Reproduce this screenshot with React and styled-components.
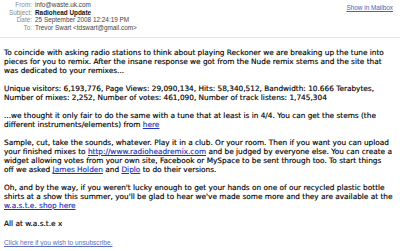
import React from "react";
import styled, { createGlobalStyle } from "styled-components";

const GlobalStyle = createGlobalStyle`
  html, body {
    margin: 0;
    padding: 0;
    background: #ffffff;
  }
  body {
    font-family: "Liberation Sans", Arial, sans-serif;
    width: 400px;
    height: 251px;
    overflow: hidden;
  }
`;

const Page = styled.div`
  width: 400px;
  height: 251px;
  display: flex;
  flex-direction: column;
  background: #fff;
`;

const Header = styled.div`
  display: flex;
  justify-content: space-between;
  align-items: flex-start;
  padding: 1px 7px 0 0;
  height: 36px;
  border-bottom: 1px solid #e4e4e4;
`;

const Fields = styled.div`
  display: grid;
  grid-template-columns: 32px auto;
  column-gap: 3px;
  font-size: 6.4px;
  line-height: 7.7px;
`;

const Label = styled.div`
  text-align: right;
  color: #8a8a8a;
`;

const Value = styled.div`
  color: ${(p) => (p.strong ? "#111" : "#444")};
  font-weight: ${(p) => (p.strong ? "bold" : "normal")};
`;

const MailboxLink = styled.a`
  margin-top: 3px;
  font-size: 6.4px;
  color: #4a62b0;
  text-decoration: underline;
`;

const Body = styled.div`
  padding: 10px 4px 0 4px;
  font-family: "DejaVu Sans", "Liberation Sans", sans-serif;
  font-size: 7.35px;
  line-height: 9px;
  color: #000;
  -webkit-text-stroke: 0.15px currentColor;
  flex: 1;
`;

const Para = styled.div`
  margin: 0 0 9px 0;
`;

const Line = styled.div`
  white-space: nowrap;
`;

const A = styled.a`
  color: #2233bb;
  text-decoration: underline;
`;

const Footer = styled.div`
  padding: 0 4px 4px 4px;
  font-size: 6.6px;
  line-height: 8px;
`;

const Unsub = styled.a`
  color: #5a6ec0;
  text-decoration: underline;
`;

export default function App() {
  return (
    <Page>
      <GlobalStyle />
      <Header>
        <Fields>
          <Label>From:</Label>
          <Value>info@waste.uk.com</Value>
          <Label>Subject:</Label>
          <Value strong>Radiohead Update</Value>
          <Label>Date:</Label>
          <Value>25 September 2008 12:24:19 PM</Value>
          <Label>To:</Label>
          <Value>Trevor Swart &lt;tdswart@gmail.com&gt;</Value>
        </Fields>
        <MailboxLink href="#">Show in Mailbox</MailboxLink>
      </Header>
      <Body>
        <Para>
          <Line>To coincide with asking radio stations to think about playing Reckoner we are breaking up the tune into</Line>
          <Line>pieces for you to remix. After the insane response we got from the Nude remix stems and the site that</Line>
          <Line>was dedicated to your remixes...</Line>
        </Para>
        <Para>
          <Line>Unique visitors: 6,193,776, Page Views: 29,090,134, Hits: 58,340,512, Bandwidth: 10.666 Terabytes,</Line>
          <Line>Number of mixes: 2,252, Number of votes: 461,090, Number of track listens: 1,745,304</Line>
        </Para>
        <Para>
          <Line>...we thought it only fair to do the same with a tune that at least is in 4/4. You can get the stems (the</Line>
          <Line>different instruments/elements) from <A href="#">here</A></Line>
        </Para>
        <Para>
          <Line>Sample, cut, take the sounds, whatever. Play it in a club. Or your room. Then if you want you can upload</Line>
          <Line>your finished mixes to <A href="#">http://www.radioheadremix.com</A> and be judged by everyone else. You can create a</Line>
          <Line>widget allowing votes from your own site, Facebook or MySpace to be sent through too. To start things</Line>
          <Line>off we asked <A href="#">James Holden</A> and <A href="#">Diplo</A> to do their versions.</Line>
        </Para>
        <Para>
          <Line>Oh, and by the way, if you weren't lucky enough to get your hands on one of our recycled plastic bottle</Line>
          <Line>shirts at a show this summer, you'll be glad to hear we've made some more and they are available at the</Line>
          <Line><A href="#">w.a.s.t.e. shop here</A></Line>
        </Para>
        <Para>All at w.a.s.t.e x</Para>
      </Body>
      <Footer>
        <Unsub href="#">Click here if you wish to unsubscribe.</Unsub>
      </Footer>
    </Page>
  );
}
